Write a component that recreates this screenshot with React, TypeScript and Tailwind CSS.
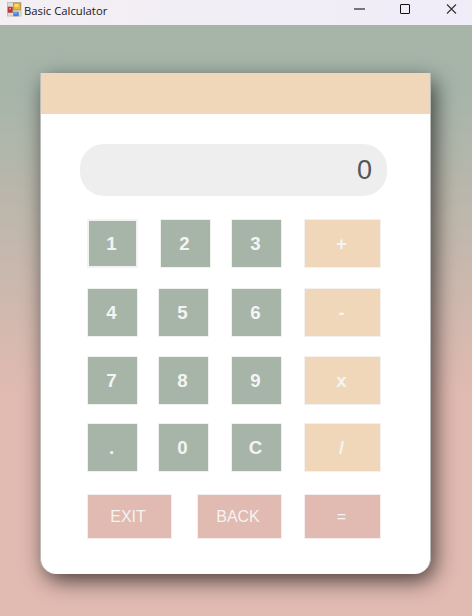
import React from "react";

type KeyProps = { label: string; className: string };

function Key({ label, className }: KeyProps) {
  return (
    <button
      className={`flex shrink-0 items-center justify-center border text-[#f3f4f3] ${className}`}
    >
      {label}
    </button>
  );
}

const digit = "h-[49px] w-[51px] border-[#f0f2f0] bg-[#a7b5a9] text-[18.67px] leading-[28px] font-bold pr-[2px]";
const focused = "h-[49px] w-[51px] border-2 border-[#f2f3f2] bg-[#a7b5a9] text-[18.67px] leading-[28px] font-bold pr-[2px]";
const operator = "h-[49px] w-[77px] border-[#f3f2f0] bg-[#f0d7ba] text-[18.67px] leading-[28px] font-bold pr-[2px] ml-[22px]";
const action = "h-[45px] w-[85px] border-[#f5eeec] bg-[#e1bab1] text-[16px] pr-[3px]";

function AppIcon() {
  return (
    <svg width="15" height="15" viewBox="0 0 15 15" className="shrink-0">
      <rect x="0.5" y="0.5" width="13.5" height="13.5" fill="#deddda" stroke="#c2c0be" />
      <rect x="1" y="5" width="4.5" height="5.5" fill="#c9302b" stroke="#a64a44" strokeWidth="0.6" />
      <rect x="2" y="6" width="2" height="1.5" fill="#e6877e" />
      <rect x="6.5" y="1" width="7" height="7" fill="#f1b526" stroke="#a98742" strokeWidth="0.7" />
      <rect x="7.5" y="2" width="4" height="3" fill="#ffdc69" />
      <rect x="6.5" y="10" width="5" height="4" fill="#3f83dd" stroke="#6383b3" strokeWidth="0.5" />
      <rect x="7.2" y="10.5" width="2.8" height="1.3" fill="#80b4f5" />
    </svg>
  );
}

export default function App() {
  return (
    <div className="flex h-[616px] w-[472px] flex-col overflow-hidden bg-[linear-gradient(to_bottom,#a7b5a9_0px,#a7b5a9_95px,#e1bab1_395px,#e1bab1_616px)] font-['Liberation_Sans',Arial,sans-serif]">
      <header className="flex h-[25px] shrink-0 bg-linear-to-r from-[#f3eff3] to-[#f0edf9] pl-[7px]">
        <div className="flex items-start pt-[2px]">
          <AppIcon />
          <span className="ml-[2px] mt-[1px] font-['Open_Sans','Noto_Sans',sans-serif] text-[11.3px] leading-[15px] whitespace-nowrap text-[#171719]">
            Basic Calculator
          </span>
        </div>
        <div className="ml-auto flex pt-[4px] pr-[15px]">
          <svg width="104" height="11" viewBox="0 0 104 11" fill="none">
            <path d="M1 5H12" stroke="#77757a" strokeWidth="2" />
            <rect x="47.5" y="0.5" width="9" height="9" rx="0.5" stroke="#111" />
            <path d="M94 0.5L103 9.5M103 0.5L94 9.5" stroke="#333" strokeWidth="1.1" />
          </svg>
        </div>
      </header>
      <main className="mt-[48px] ml-[40px] flex h-[501px] w-[391px] flex-col overflow-hidden rounded-b-[16px] border-l border-r border-[#babdb9] bg-white shadow-[4px_7px_22px_-1px_rgba(0,0,0,0.7)]">
        <div className="h-[41px] shrink-0 bg-[#f0d7ba]" />
        <div className="mt-[30px] ml-[39px] flex h-[52px] w-[307px] shrink-0 items-center justify-end rounded-[24px] bg-[#eeeeee] pr-[15px] text-[27px] text-[#55565a]">
          0
        </div>
        <div className="mt-[23px] flex pl-[46px]">
          <Key label="1" className={focused} />
          <Key label="2" className={`ml-[22px] ${digit}`} />
          <Key label="3" className={`ml-[20px] ${digit}`} />
          <Key label="+" className={operator} />
        </div>
        <div className="mt-[20px] flex pl-[46px]">
          <Key label="4" className={digit} />
          <Key label="5" className={`ml-[20px] ${digit}`} />
          <Key label="6" className={`ml-[22px] ${digit}`} />
          <Key label="-" className={operator} />
        </div>
        <div className="mt-[19px] flex pl-[46px]">
          <Key label="7" className={digit} />
          <Key label="8" className={`ml-[20px] ${digit}`} />
          <Key label="9" className={`ml-[22px] ${digit}`} />
          <Key label="x" className={operator} />
        </div>
        <div className="mt-[18px] flex pl-[46px]">
          <Key label="." className={digit} />
          <Key label="0" className={`ml-[20px] ${digit}`} />
          <Key label="C" className={`ml-[22px] ${digit}`} />
          <Key label="/" className={operator} />
        </div>
        <div className="mt-[22px] flex pl-[46px]">
          <Key label="EXIT" className={action} />
          <Key label="BACK" className={`ml-[25px] ${action}`} />
          <Key label="=" className="ml-[22px] h-[45px] w-[77px] border-[#f5eeec] bg-[#e1bab1] pr-[2px] text-[16px]" />
        </div>
      </main>
    </div>
  );
}
